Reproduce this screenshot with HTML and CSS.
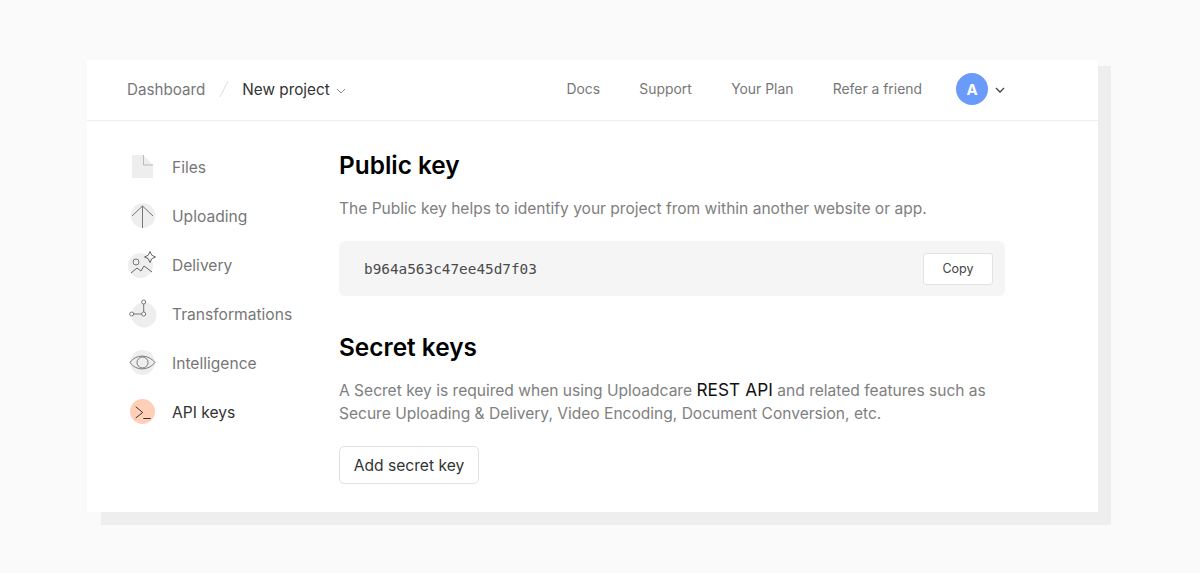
FILE: index.html
```html
<!DOCTYPE html>
<html lang="en">
<head>
<meta charset="utf-8">
<title>API keys</title>
<link rel="stylesheet" href="styles.css">
</head>
<body>
<div class="card">
  <header class="topbar">
    <nav class="crumbs">
      <a class="crumb">Dashboard</a>
      <svg class="slash" width="10" height="18" viewBox="0 0 10 18"><path d="M9 1 1 17" stroke="#dcdcdc" fill="none"/></svg>
      <a class="crumb current">New project</a>
      <svg class="caret" width="10" height="6" viewBox="0 0 10 6"><path d="M1 1l4 4 4-4" stroke="#8a8a8a" fill="none"/></svg>
    </nav>
    <nav class="toplinks">
      <a>Docs</a><a>Support</a><a>Your Plan</a><a>Refer a friend</a>
    </nav>
    <div class="user">
      <span class="avatar">A</span>
      <svg class="usercaret" width="10" height="6" viewBox="0 0 10 6"><path d="M1 1l4 4 4-4" stroke="#444" stroke-width="1.3" fill="none"/></svg>
    </div>
  </header>
  <div class="body">
    <aside class="side">
      <a class="item">
        <svg class="ico" width="30" height="29" viewBox="0 0 30 29"><path d="M5 3h11l10 10v13H5z" fill="#eeeeee"/><path d="M16.500 3v10H26" fill="none" stroke="#bbb"/></svg>
        <span>Files</span>
      </a>
      <a class="item">
        <svg class="ico" width="30" height="29" viewBox="0 0 30 29"><circle cx="16" cy="14.500" r="12.300" fill="#eeeeee"/><path d="M5 15 15.500 5 26 15M15.500 5v22" fill="none" stroke="#777"/></svg>
        <span>Uploading</span>
      </a>
      <a class="item">
        <svg class="ico" width="30" height="29" viewBox="0 0 30 29"><circle cx="13.500" cy="15.500" r="12.500" fill="#eeeeee"/><circle cx="9" cy="12" r="3" fill="none" stroke="#777"/><path d="M4 23l6-5 4 3 3-5 8 6M23 1.500Q23.800 6.200 28.500 7 23.800 7.800 23 12.500 22.200 7.800 17.500 7 22.200 6.200 23 1.500z" fill="none" stroke="#666"/></svg>
        <span>Delivery</span>
      </a>
      <a class="item">
        <svg class="ico" width="30" height="29" viewBox="0 0 30 29"><circle cx="17" cy="16" r="12.500" fill="#eeeeee"/><path d="M6.500 15h8.500M16.700 13V5" stroke="#777" fill="none"/><circle cx="4.700" cy="15" r="2" fill="#fff" stroke="#777"/><circle cx="16.700" cy="15" r="2" fill="#fff" stroke="#777"/><circle cx="16.700" cy="3" r="2" fill="#fff" stroke="#777"/></svg>
        <span>Transformations</span>
      </a>
      <a class="item">
        <svg class="ico" width="30" height="29" viewBox="0 0 30 29"><circle cx="15.500" cy="14.500" r="12.500" fill="#eeeeee"/><path d="M3 14.500C9 6 21 6 28 14.500 21 23 9 23 3 14.500z" fill="none" stroke="#777"/><circle cx="15.500" cy="14.500" r="5.500" fill="none" stroke="#777"/></svg>
        <span>Intelligence</span>
      </a>
      <a class="item active">
        <svg class="ico" width="30" height="29" viewBox="0 0 30 29"><circle cx="15.500" cy="14.500" r="12.500" fill="#ffcfb8"/><path d="M8.700 9.700l7 5.800-7 5.500M16.300 21.500h7.400" fill="none" stroke="#333"/></svg>
        <span>API keys</span>
      </a>
    </aside>
    <main class="main">
      <h2 class="title">Public key</h2>
      <p class="text">The Public key helps to identify your project from within another website or app.</p>
      <div class="keybox">
        <code class="key">b964a563c47ee45d7f03</code>
        <button class="copy">Copy</button>
      </div>
      <h2 class="title second">Secret keys</h2>
      <p class="text tight">A Secret key is required when using Uploadcare <a class="inline">REST API</a> and related features such as<br>Secure Uploading &amp; Delivery, Video Encoding, Document Conversion, etc.</p>
      <button class="add">Add secret key</button>
    </main>
  </div>
</div>
</body>
</html>
```
FILE: styles.css
```css
* { box-sizing: border-box; }
html, body { margin: 0; height: 100%; }
body {
  background: #fafafa;
  font-family: Inter, "Liberation Sans", sans-serif;
  padding: 60px 102px 0 87px;
  overflow: hidden;
}
.card {
  position: relative;
  background: #fff;
  height: 452px;
}
.card::before {
  content: "";
  position: absolute;
  z-index: -1;
  top: 6px;
  left: 14px;
  right: -13px;
  bottom: -13px;
  background: #eeeeee;
}
.topbar {
  height: 61px;
  border-bottom: 1px solid #eeeeee;
  display: flex;
  align-items: center;
  padding: 0 93px 2px 40px;
}
.crumbs { display: flex; align-items: center; flex: 1; }
.crumb { font-size: 15.200px; color: #777; }
.crumb.current { font-size: 15.300px; color: #333; }
.slash { margin: 0 13px 0 14px; }
.caret { margin: 3px 0 0 6px; }
.toplinks { display: flex; gap: 39.300px; font-size: 13.900px; color: #777; }
.user { display: flex; align-items: center; gap: 7px; margin-left: 34px; }
.usercaret { margin-top: 2px; }
.avatar {
  width: 32px;
  height: 32px;
  border-radius: 50%;
  background: #6a9bfb;
  color: #fff;
  font-weight: 700;
  font-size: 15px;
  display: flex;
  align-items: center;
  justify-content: center;
}
.body { display: flex; padding: 0 0 0 40px; }
.side { width: 212px; padding-top: 22px; display: flex; flex-direction: column; }
.item { height: 49px; display: flex; align-items: center; gap: 15px; color: #777; font-size: 15.600px; }
.item.active { color: #333; }
.ico { flex: none; margin-top: -2px; }
.main { width: 666px; padding-top: 28px; }
.title { margin: 0; font-size: 24.400px; line-height: 32px; font-weight: 600; color: #000; }
.second { margin-top: 35px; }
.text { margin: 16px 0 0; font-size: 15.550px; line-height: 23px; color: #808080; }
.text.tight { margin-top: 15px; }
.inline { color: #111; font-size: 17.200px; letter-spacing: 0.100px; }
.keybox {
  margin-top: 21px;
  height: 55px;
  background: #f5f5f5;
  border-radius: 6px;
  display: flex;
  align-items: center;
  justify-content: space-between;
  padding: 0 12px 0 25px;
}
.key { font-family: "DejaVu Sans Mono", monospace; font-size: 14.370px; color: #4a4a4a; }
.copy {
  width: 70px;
  height: 32px;
  background: #fff;
  border: 1px solid #e2e2e2;
  border-radius: 3px;
  font: 12.500px Inter, sans-serif;
  color: #444;
}
.add {
  display: block;
  margin-top: 21px;
  width: 140px;
  height: 38px;
  background: #fff;
  border: 1px solid #e2e2e2;
  border-radius: 5px;
  font: 15.600px Inter, sans-serif;
  color: #333;
}
```
